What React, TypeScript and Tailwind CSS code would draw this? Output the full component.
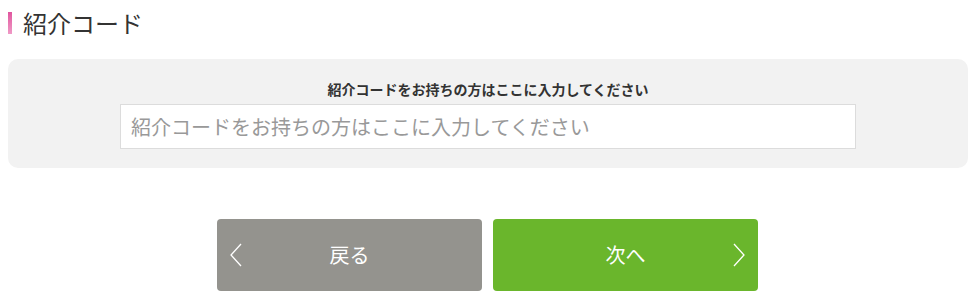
import React, { useState } from 'react';

const font = { fontFamily: '"Noto Sans CJK JP", "Noto Sans", sans-serif' };

const App: React.FC = () => {
  const [code, setCode] = useState('');

  return (
    <div className="w-[971px] h-[299px] bg-white text-[#333]" style={font}>
      {/* Heading */}
      <div className="flex items-center h-[45px] pl-2">
        <span className="w-[4px] h-[22px] bg-gradient-to-b from-[#e0559f] to-[#ef99c6]" />
        <h2 className="ml-[11px] text-[24px] leading-none text-[#333]">紹介コード</h2>
      </div>

      {/* Code box */}
      <div className="ml-2 w-[960px] mt-[14px] h-[109px] rounded-[10px] bg-[#f2f2f2] flex flex-col items-center pt-[19px]">
        <label htmlFor="intro-code" className="text-[14px] font-bold leading-[22px] text-[#333]">
          紹介コードをお持ちの方はここに入力してください
        </label>
        <input
          id="intro-code"
          value={code}
          onChange={(e) => setCode(e.target.value)}
          placeholder="紹介コードをお持ちの方はここに入力してください"
          className="mt-[4px] w-[736px] h-[45px] border border-[#dcdcdc] bg-white px-[10px] text-[20px] text-[#333] placeholder:text-[#999] outline-none"
          style={font}
        />
      </div>

      {/* Buttons */}
      <div className="flex justify-center gap-[11px] mt-[51px] pl-[4px]">
        <button className="relative w-[265px] h-[72px] rounded-[4px] bg-[#94938e] text-white text-[20px] flex items-center justify-center">
          <svg className="absolute left-[12px] top-[24px]" width="14" height="24" viewBox="0 0 14 24" fill="none">
            <path d="M12 1 L2 12 L12 23" stroke="#fff" strokeWidth="1.3" />
          </svg>
          戻る
        </button>
        <button className="relative w-[265px] h-[72px] rounded-[4px] bg-[#6ab62c] text-white text-[20px] flex items-center justify-center">
          次へ
          <svg className="absolute right-[12px] top-[24px]" width="14" height="24" viewBox="0 0 14 24" fill="none">
            <path d="M2 1 L12 12 L2 23" stroke="#fff" strokeWidth="1.3" />
          </svg>
        </button>
      </div>
    </div>
  );
};

export default App;
